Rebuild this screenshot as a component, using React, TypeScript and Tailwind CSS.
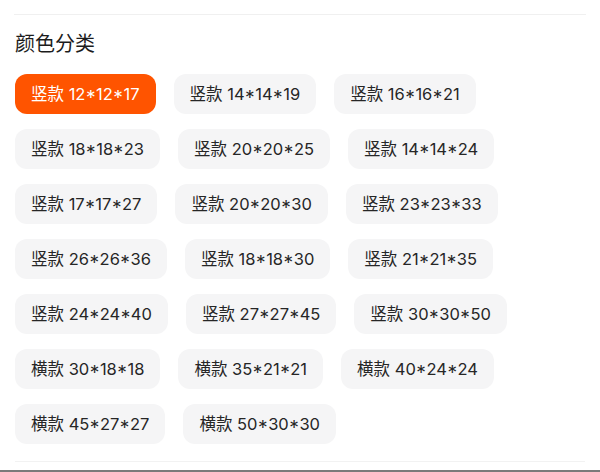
import React from "react";

const sizes = [
  "竖款 12*12*17",
  "竖款 14*14*19",
  "竖款 16*16*21",
  "竖款 18*18*23",
  "竖款 20*20*25",
  "竖款 14*14*24",
  "竖款 17*17*27",
  "竖款 20*20*30",
  "竖款 23*23*33",
  "竖款 26*26*36",
  "竖款 18*18*30",
  "竖款 21*21*35",
  "竖款 24*24*40",
  "竖款 27*27*45",
  "竖款 30*30*50",
  "横款 30*18*18",
  "横款 35*21*21",
  "横款 40*24*24",
  "横款 45*27*27",
  "横款 50*30*30",
];

export default function App() {
  const [selected, setSelected] = React.useState(0);

  return (
    <div
      className="w-[600px] h-[472px] bg-white flex flex-col overflow-hidden"
      style={{ fontFamily: 'Inter, "Noto Sans CJK SC", sans-serif' }}
    >
      <div className="px-[14px] pt-[14px]">
        <div className="h-px bg-[#f0f0f0]" />
      </div>
      <div className="px-[15px] pt-[16px] flex-1">
        <h3 className="text-[20px] leading-[26px] text-[#1c1c1c]">颜色分类</h3>
        <div className="mt-[17px] flex flex-wrap gap-x-[18px] gap-y-[15px]">
          {sizes.map((s, i) => (
            <button
              key={s}
              onClick={() => setSelected(i)}
              className={
                i === selected
                  ? "h-10 px-4 rounded-xl bg-[#ff5400] text-white text-[16.5px] proportional-nums"
                  : "h-10 px-4 rounded-xl bg-[#f5f5f6] text-[#262626] text-[16.5px] proportional-nums"
              }
            >
              {s}
            </button>
          ))}
        </div>
        <div className="mt-[17px] h-px bg-[#f2f2f2]" />
      </div>
      <div className="h-[2px] bg-[#7a7a7a]" />
    </div>
  );
}
